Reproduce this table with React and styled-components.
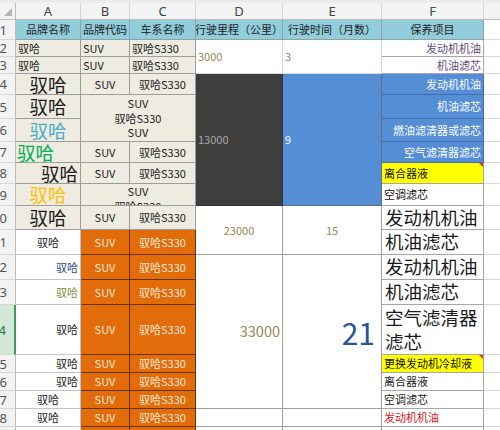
import React from "react";
import styled, { createGlobalStyle, css } from "styled-components";

const GlobalStyle = createGlobalStyle`
  html, body {
    margin: 0;
    padding: 0;
    background: #fff;
  }
  body {
    font-family: "Noto Sans CJK SC", "Noto Sans", sans-serif;
  }
`;

const Sheet = styled.div`
  display: grid;
  grid-template-columns: 16px 65px 49px 66px 87px 99px 102px 100px;
  grid-template-rows: 3px 17px 20px 17px 17px 21px 24px 23px 21px 21px 22px 24px 25px 25px 25px 50px 18px 18px 18px 18px 18px;
  width: 500px;
  height: 430px;
  overflow: hidden;
  box-sizing: border-box;
  * {
    box-sizing: border-box;
  }
`;

const Strip = styled.div`
  grid-row: 1;
  grid-column: 1 / -1;
  background: #ececec;
`;

const Corner = styled.div`
  grid-row: 2;
  grid-column: 1;
  position: relative;
  background: #f3f3f3;
  border-right: 1px solid #bdbdbd;
  border-bottom: 1px solid #bdbdbd;
  &::after {
    content: "";
    position: absolute;
    right: 3px;
    bottom: 3px;
    border-style: solid;
    border-width: 0 0 8px 8px;
    border-color: transparent transparent #b4b4b4 transparent;
  }
`;

const ColHead = styled.div`
  grid-row: 2;
  grid-column: ${(p) => p.$c};
  display: flex;
  align-items: center;
  justify-content: center;
  background: #f3f3f3;
  color: #444;
  font-family: "Noto Sans", sans-serif;
  font-size: 13px;
  border-right: 1px solid #d4d4d4;
  border-bottom: 1px solid #bdbdbd;
`;

const RowHead = styled.div`
  grid-row: ${(p) => p.$r};
  grid-column: 1;
  display: flex;
  align-items: center;
  justify-content: flex-end;
  padding-right: 8px;
  overflow: hidden;
  white-space: nowrap;
  font-family: "Noto Sans", sans-serif;
  font-size: 13px;
  color: #555;
  background: #f3f3f3;
  border-bottom: 1px solid #d8d8d8;
  border-right: 1px solid #bdbdbd;
  ${(p) =>
    p.$active &&
    css`
      background: #d3e7d6;
      color: #217346;
      border-right: 2px solid #3f9a5a;
    `}
`;

const justify = { left: "flex-start", center: "center", right: "flex-end" };

const Cell = styled.div`
  grid-row: ${(p) => p.$r} / span ${(p) => p.$rs || 1};
  grid-column: ${(p) => p.$c} / span ${(p) => p.$cs || 1};
  position: relative;
  display: flex;
  align-items: ${(p) => p.$valign || "center"};
  justify-content: ${(p) => justify[p.$align || "left"]};
  text-align: ${(p) => p.$align || "left"};
  padding: ${(p) => p.$pad || "0 2px"};
  background: ${(p) => p.$bg || "#fff"};
  color: ${(p) => p.$fg || "#1a1a1a"};
  font-size: ${(p) => p.$size || 11}px;
  line-height: ${(p) => p.$lh || 1.3};
  border-right: 1px solid ${(p) => p.$line || "#dadada"};
  border-bottom: 1px solid ${(p) => p.$line || "#dadada"};
  white-space: ${(p) => (p.$wrap ? "pre-line" : "nowrap")};
  overflow: hidden;
  ${(p) =>
    p.$note &&
    css`
      &::after {
        content: "";
        position: absolute;
        top: 0;
        right: 0;
        border-style: solid;
        border-width: 0 4px 4px 0;
        border-color: transparent #d0342c transparent transparent;
      }
    `}
`;

const BEIGE = "#eeece1";
const TAN = "#948a54";

const head = { $bg: "#92cddc", $line: "#8ba3ab", $align: "center", $fg: "#1e1e1e" };
const beige = { $bg: BEIGE, $line: "#9c9c9c" };
const big = { ...beige, $size: 18.5, $lh: 1 };
const orange = { $bg: "#e26b0a", $fg: "#fde9d9", $line: "#6a3306", $align: "center" };
const fcol = { $line: "#a6a6a6" };
const blueF = { $bg: "#558ed5", $fg: "#fff", $line: "#4170ad", $align: "right" };
const bigF = { ...fcol, $size: 18.5, $lh: 1.25, $pad: "0 3px" };
const aCol = { $line: "#c4c4c4" };
const mid = { $line: "#a0a0a0" };

// columns: A=2 ... G=8, sheet row n = grid row n + 2
const A = 2, B = 3, C = 4, D = 5, E = 6, F = 7, G = 8;
const row = (n) => n + 2;

const cells = [
  [1, A, "品牌名称", head],
  [1, B, "品牌代码", head],
  [1, C, "车系名称", head],
  [1, D, "行驶里程（公里）", { ...head, $pad: "0 1px" }],
  [1, E, "行驶时间（月数）", head],
  [1, F, "保养项目", head],

  [2, A, "驭哈", beige],
  [2, B, "SUV", beige],
  [2, C, "驭哈S330", beige],
  [2, D, "3000", { $rs: 2, $fg: TAN }],
  [2, E, "3", { $rs: 2, $fg: TAN }],
  [2, F, "发动机机油", { ...fcol, $align: "right", $fg: "#5f497a" }],
  [3, A, "驭哈", beige],
  [3, B, "SUV", beige],
  [3, C, "驭哈S330", beige],
  [3, F, "机油滤芯", { ...fcol, $align: "right", $fg: "#5f497a" }],

  [4, A, "驭哈", { ...big, $align: "center" }],
  [4, B, "SUV", { ...beige, $align: "center" }],
  [4, C, "驭哈S330", { ...beige, $align: "center" }],
  [4, D, "13000", { $rs: 6, $bg: "#3e3e3e", $fg: "#a8a8a8", $line: "#333" }],
  [4, E, "9", { $rs: 6, $bg: "#558ed5", $fg: "#fff", $line: "#5d6f86" }],
  [4, F, "发动机机油", blueF],
  [5, A, "驭哈", { ...big, $align: "center" }],
  [5, B, "SUV\n驭哈S330\nSUV", { ...beige, $rs: 2, $cs: 2, $align: "center", $wrap: true, $lh: 1.32 }],
  [5, F, "机油滤芯", blueF],
  [6, A, "驭哈", { ...big, $align: "center", $fg: "#4bacc6" }],
  [6, F, "燃油滤清器或滤芯", blueF],
  [7, A, "驭哈", { ...big, $align: "left", $fg: "#00b050", $pad: "0 1px" }],
  [7, B, "SUV", { ...beige, $align: "center" }],
  [7, C, "驭哈S330", { ...beige, $align: "center" }],
  [7, F, "空气滤清器滤芯", blueF],
  [8, A, "驭哈", { ...big, $align: "right" }],
  [8, B, "SUV", { ...beige, $align: "center" }],
  [8, C, "驭哈S330", { ...beige, $align: "center" }],
  [8, F, "离合器液", { ...fcol, $bg: "#ffff00", $fg: "#111", $note: true }],
  [9, A, "驭哈", { ...big, $align: "center", $fg: "#ffc000" }],
  [9, B, "SUV\n驭哈S330", { ...beige, $cs: 2, $align: "center", $wrap: true, $valign: "flex-start", $lh: 1.32, $pad: "0 2px" }],
  [9, F, "空调滤芯", { ...fcol, $fg: "#111" }],

  [10, A, "驭哈", { ...big, $align: "center" }],
  [10, B, "SUV", { ...beige, $align: "center" }],
  [10, C, "驭哈S330", { ...beige, $align: "center" }],
  [10, D, "23000", { ...mid, $rs: 2, $align: "center", $fg: TAN }],
  [10, E, "15", { ...mid, $rs: 2, $align: "center", $fg: TAN }],
  [10, F, "发动机机油", bigF],

  [11, A, "驭哈", { ...aCol, $align: "center" }],
  [11, F, "机油滤芯", bigF],
  [12, A, "驭哈", { ...aCol, $align: "right", $fg: "#1f497d" }],
  [12, D, "33000", { ...mid, $rs: 6, $align: "right", $fg: TAN, $size: 14.5 }],
  [12, E, "21", { ...mid, $rs: 6, $align: "right", $fg: "#25569a", $size: 30, $lh: 1, $pad: "0 6px 0 2px" }],
  [12, F, "发动机机油", bigF],
  [13, A, "驭哈", { ...aCol, $align: "right", $fg: "#76923c" }],
  [13, F, "机油滤芯", bigF],
  [14, A, "驭哈", { ...aCol, $align: "right" }],
  [14, F, "空气滤清器滤芯", { ...bigF, $wrap: true }],
  [15, A, "驭哈", { ...aCol, $align: "right" }],
  [15, F, "更换发动机冷却液", { ...fcol, $bg: "#ffff00", $fg: "#111", $note: true }],
  [16, A, "驭哈", { ...aCol, $align: "right" }],
  [16, F, "离合器液", { ...fcol, $fg: "#222" }],
  [17, A, "驭哈", { ...aCol, $align: "center" }],
  [17, F, "空调滤芯", { ...fcol, $fg: "#222" }],
  [18, A, "驭哈", { ...aCol, $align: "center" }],
  [18, D, "", mid],
  [18, E, "", mid],
  [18, F, "发动机机油", { ...fcol, $fg: "#e3141b" }],
  [19, A, "", aCol],
  [19, D, "", mid],
  [19, E, "", mid],
  [19, F, "", fcol],
];

// the orange SUV block, rows 11 to 19
for (let n = 11; n <= 19; n++) {
  cells.push([n, B, n < 19 ? "SUV" : "", orange]);
  cells.push([n, C, n < 19 ? "驭哈S330" : "", orange]);
}
// empty column G
for (let n = 1; n <= 19; n++) {
  cells.push([n, G, "", {}]);
}

const letters = ["A", "B", "C", "D", "E", "F", "G"];

export default function App() {
  return (
    <>
      <GlobalStyle />
      <Sheet>
        <Strip />
        <Corner />
        {letters.map((l, i) => (
          <ColHead key={l} $c={i + 2}>
            {l}
          </ColHead>
        ))}
        {Array.from({ length: 19 }, (_, i) => (
          <RowHead key={i} $r={row(i + 1)} $active={i + 1 === 14}>
            {i + 1}
          </RowHead>
        ))}
        {cells.map(([n, c, text, props]) => (
          <Cell key={`${n}-${c}`} $r={row(n)} $c={c} {...props}>
            {text}
          </Cell>
        ))}
      </Sheet>
    </>
  );
}
